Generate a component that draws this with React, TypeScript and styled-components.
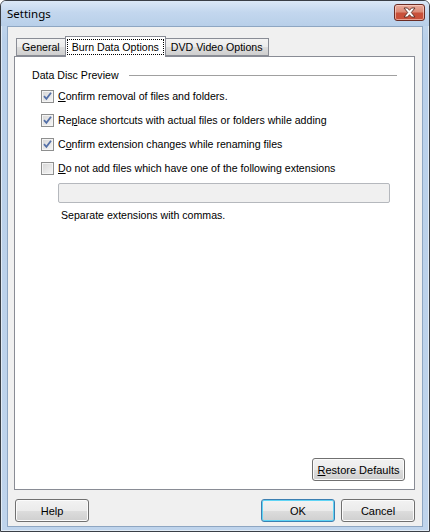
import React from 'react';
import styled, { createGlobalStyle } from 'styled-components';

const GlobalStyle = createGlobalStyle`
  html, body {
    margin: 0;
    padding: 0;
    background: #ffffff;
  }
  * {
    box-sizing: border-box;
  }
`;

const rows = [
  { before: '', key: 'C', after: 'onfirm removal of files and folders.', checked: true },
  { before: 'Re', key: 'p', after: 'lace shortcuts with actual files or folders while adding', checked: true },
  { before: 'C', key: 'o', after: 'nfirm extension changes while renaming files', checked: true },
  { before: '', key: 'D', after: 'o not add files which have one of the following extensions', checked: false },
];

function CheckBox(props: { checked: boolean }) {
  return (
    <Box>
      {props.checked && (
        <svg width="9" height="9" viewBox="0 0 9 9">
          <path d="M1 4.2 L3.4 6.8 L8 0.8" fill="none" stroke="#5470a8" strokeWidth="1.8" />
        </svg>
      )}
    </Box>
  );
}

function App() {
  return (
    <>
      <GlobalStyle />
      <Window>
        <TitleBar>
          <Title>Settings</Title>
          <CloseButton>
            <svg width="15" height="11" viewBox="0 0 15 11">
              <path
                d="M2 1 L5.5 1 L7.5 3.3 L9.5 1 L13 1 L9.3 5.5 L13 10 L9.5 10 L7.5 7.7 L5.5 10 L2 10 L5.7 5.5 Z"
                fill="#ffffff"
                stroke="#5a2a22"
                strokeWidth="0.9"
              />
            </svg>
          </CloseButton>
        </TitleBar>
        <Client>
          <TabStrip>
            <Tab>General</Tab>
            <Tab active>
              <Focus>Burn Data Options</Focus>
            </Tab>
            <Tab>DVD Video Options</Tab>
          </TabStrip>
          <Panel>
            <GroupHeader>
              <span>Data Disc Preview</span>
              <GroupLine />
            </GroupHeader>
            <Options>
              {rows.map((row, index) => {
                return (
                  <OptionRow key={index}>
                    <CheckBox checked={row.checked} />
                    <Label>
                      {row.before}
                      <Key>{row.key}</Key>
                      {row.after}
                    </Label>
                  </OptionRow>
                );
              })}
            </Options>
            <ExtInput disabled />
            <Hint>Separate extensions with commas.</Hint>
            <PanelFooter>
              <Button width={93}>
                <Key>R</Key>estore Defaults
              </Button>
            </PanelFooter>
          </Panel>
          <Footer>
            <Button width={74}>Help</Button>
            <RightButtons>
              <Button width={74} primary>
                OK
              </Button>
              <Button width={74}>Cancel</Button>
            </RightButtons>
          </Footer>
        </Client>
      </Window>
    </>
  );
}

const Window = styled.div`
  width: 430px;
  height: 532px;
  display: flex;
  flex-direction: column;
  border: 1px solid #3a3f46;
  border-radius: 6px 6px 0 0;
  background: linear-gradient(to bottom, #c9dbef 0px, #b9d0ea 40px, #bfd4ec 100%);
  box-shadow: inset 0 0 0 1px rgba(255, 255, 255, 0.55);
  font-family: 'Liberation Sans', Arial, sans-serif;
  font-size: 10.6px;
  color: #000;
`;

const TitleBar = styled.div`
  height: 25px;
  display: flex;
  align-items: center;
  justify-content: space-between;
  padding: 0 4px 0 6px;
  background: linear-gradient(to bottom, #dbe8f6 0%, #c3d7ee 45%, #b8cfe9 100%);
  border-radius: 5px 5px 0 0;
`;

const Title = styled.div`
  font-family: 'Noto Sans', 'Open Sans', sans-serif;
  font-size: 11.5px;
  color: #000;
  margin-top: -1px;
`;

const CloseButton = styled.div`
  width: 31px;
  height: 17px;
  margin-top: -2px;
  display: flex;
  align-items: center;
  justify-content: center;
  border: 1px solid #6b2c24;
  border-radius: 3px;
  background: linear-gradient(to bottom, #e9ab9c 0%, #dc8c78 45%, #c8503a 55%, #c94f3a 100%);
  box-shadow: inset 0 0 0 1px rgba(255, 220, 210, 0.6);
`;

const Client = styled.div`
  flex: 1;
  margin: 0 6px 4px 6px;
  display: flex;
  flex-direction: column;
  background: #f0f0f0;
  border: 1px solid #8ea6c2;
  padding: 9px 7px 4px 6px;
`;

const TabStrip = styled.div`
  height: 21px;
  display: flex;
  align-items: flex-end;
  padding-left: 2px;
  position: relative;
  z-index: 1;
  margin-bottom: -1px;
`;

const Tab = styled.div<{ active?: boolean }>`
  height: ${(p) => (p.active ? '21px' : '18px')};
  margin: ${(p) => (p.active ? '0 -1px 0 -1px' : '0 0 1px 0')};
  padding: ${(p) => (p.active ? '2px 1px 0 1px' : '2px 5px 0 5px')};
  border: 1px solid #898c95;
  border-bottom: ${(p) => (p.active ? 'none' : '1px solid #898c95')};
  background: ${(p) => (p.active ? '#ffffff' : 'linear-gradient(to bottom, #f3f3f3 0%, #ebebeb 50%, #dddddd 51%, #cfcfcf 100%)')};
  position: relative;
  z-index: ${(p) => (p.active ? 2 : 1)};
  white-space: nowrap;
  line-height: 13px;
`;

const Focus = styled.span`
  display: inline-block;
  border: 1px dotted #000;
  padding: 0 4px;
  line-height: 14px;
`;

const Panel = styled.div`
  flex: 1;
  display: flex;
  flex-direction: column;
  background: #ffffff;
  border: 1px solid #898c95;
  padding: 12px 17px 8px 17px;
`;

const GroupHeader = styled.div`
  display: flex;
  align-items: center;
  gap: 10px;
  line-height: 13px;
`;

const GroupLine = styled.div`
  flex: 1;
  height: 1px;
  background: #a0a0a0;
`;

const Options = styled.div`
  display: flex;
  flex-direction: column;
  gap: 11px;
  margin: 8px 0 0 9px;
`;

const OptionRow = styled.div`
  display: flex;
  align-items: center;
  gap: 4px;
  height: 13px;
`;

const Box = styled.div`
  width: 13px;
  height: 13px;
  flex: none;
  display: flex;
  align-items: center;
  justify-content: center;
  border: 1px solid #8e8f8f;
  background: linear-gradient(135deg, #d6d6d6 0%, #ececec 70%, #f8f8f8 100%);
  box-shadow: inset 0 0 0 1px #f4f4f4;
`;

const Label = styled.span`
  line-height: 13px;
  white-space: nowrap;
`;

const Key = styled.span`
  text-decoration: underline;
`;

const ExtInput = styled.input`
  width: 332px;
  height: 20px;
  margin: 8px 0 0 26px;
  border: 1px solid #b5b8bd;
  border-radius: 2px;
  background: #f0f0f0;
  outline: none;
`;

const Hint = styled.div`
  margin: 6px 0 0 29px;
  line-height: 13px;
`;

const PanelFooter = styled.div`
  margin-top: auto;
  display: flex;
  justify-content: flex-end;
  margin-right: -8px;
`;

const Footer = styled.div`
  display: flex;
  justify-content: space-between;
  margin-top: 9px;
  padding: 0 0 0 1px;
`;

const RightButtons = styled.div`
  display: flex;
  gap: 6px;
`;

const Button = styled.div<{ width: number; primary?: boolean }>`
  width: ${(p) => p.width}px;
  height: 23px;
  display: flex;
  align-items: center;
  justify-content: center;
  border: 1px solid ${(p) => (p.primary ? '#3c7fb1' : '#707070')};
  border-radius: 3px;
  background: linear-gradient(to bottom, #f2f2f2 0%, #ebebeb 50%, #dddddd 51%, #cfcfcf 100%);
  box-shadow: inset 0 0 0 1px ${(p) => (p.primary ? '#5fd4f5' : '#fbfbfb')};
  white-space: nowrap;
  font-size: 11px;
`;

export default App;
